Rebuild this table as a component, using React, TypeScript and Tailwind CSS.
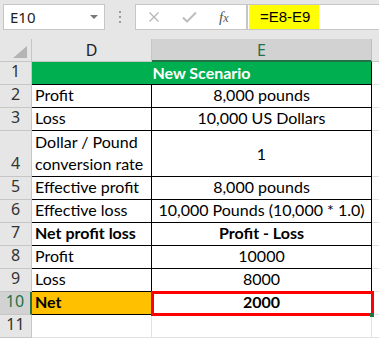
import React from "react";

const cellFont = "font-['Lato',sans-serif] text-[16px]";
const uiFont = "font-['Noto_Sans',sans-serif]";

type Row = { n: string; d: string[]; e: string; bold?: boolean; tall?: boolean };

const rows: Row[] = [
  { n: "2", d: ["Profit"], e: "8,000 pounds" },
  { n: "3", d: ["Loss"], e: "10,000 US Dollars" },
  { n: "4", d: ["Dollar / Pound", "conversion rate"], e: "1", tall: true },
  { n: "5", d: ["Effective profit"], e: "8,000 pounds" },
  { n: "6", d: ["Effective loss"], e: "10,000 Pounds (10,000 * 1.0)" },
  { n: "7", d: ["Net profit loss"], e: "Profit - Loss", bold: true },
  { n: "8", d: ["Profit"], e: "10000" },
  { n: "9", d: ["Loss"], e: "8000" },
];

function RowHeader({ n, selected }: { n: string; selected?: boolean }) {
  return (
    <div
      className={
        selected
          ? `w-[32px] shrink-0 border-b border-r-2 border-b-[#c6c6c6] border-r-[#217346] bg-[#d2d2d2] text-[#217346] flex items-end justify-center pb-[1px] text-[16px] ${uiFont}`
          : `w-[32px] shrink-0 border-b border-r border-[#c6c6c6] bg-[#e6e6e6] text-[#333] flex items-end justify-center pb-[1px] text-[16px] ${uiFont}`
      }
    >
      {n}
    </div>
  );
}

export default function App() {
  return (
    <div className="w-[379px] h-[338px] overflow-hidden bg-[#e6e6e6] relative">
      {/* Formula bar */}
      <div className="h-[39px] flex items-start pt-[4px]">
        <div className={`ml-[3px] w-[102px] h-[26px] bg-white border border-[#c6c6c6] flex items-center justify-between pl-[6px] pr-[6px] text-[15px] text-[#222] ${uiFont}`}>
          <span>E10</span>
          <svg width="8" height="5" viewBox="0 0 8 5">
            <polygon points="0,0 8,0 4,4" fill="#777" />
          </svg>
        </div>
        <div className="w-[30px] h-[26px] flex flex-col items-center justify-center gap-[3px]">
          <div className="w-[2px] h-[2px] bg-[#9a9a9a]" />
          <div className="w-[2px] h-[2px] bg-[#9a9a9a]" />
          <div className="w-[2px] h-[2px] bg-[#9a9a9a]" />
        </div>
        <div className="w-[112px] h-[26px] bg-white border border-[#c6c6c6] flex items-center">
          <svg className="ml-[12px]" width="12" height="12" viewBox="0 0 12 12">
            <path d="M1.5 1.5 L10.5 10.5 M10.5 1.5 L1.5 10.5" stroke="#b5b5b5" strokeWidth="1.3" fill="none" />
          </svg>
          <svg className="ml-[22px]" width="15" height="12" viewBox="0 0 15 12">
            <path d="M1 6.5 L5 10.5 L14 1.5" stroke="#bdbdbd" strokeWidth="2" fill="none" />
          </svg>
          <span className="ml-[22px] font-['Liberation_Serif',serif] italic text-[15px] text-[#555] leading-none">
            f<span className="text-[12px]">x</span>
          </span>
        </div>
        <div className="flex-1 h-[26px] bg-white border border-[#c6c6c6] border-r-0 flex items-stretch">
          <div className={`ml-[1px] w-[70px] bg-[#ffff00] flex items-center pl-[11px] text-[15px] text-black font-['Liberation_Sans',sans-serif]`}>
            =E8-E9
          </div>
        </div>
      </div>

      {/* Column headers */}
      <div className="flex h-[23px]">
        <div className="w-[32px] shrink-0 border-r border-b border-[#c6c6c6] bg-[#e6e6e6] flex items-end justify-end pr-[4px] pb-[3px]">
          <svg width="14" height="12" viewBox="0 0 14 12">
            <polygon points="14,0 14,12 0,12" fill="#b4b4b4" />
          </svg>
        </div>
        <div className={`w-[120px] shrink-0 border-r border-b border-[#c6c6c6] bg-[#e6e6e6] flex items-center justify-center text-[16px] text-[#222] ${uiFont}`}>
          D
        </div>
        <div className={`w-[220px] shrink-0 border-r border-[#bdbdbd] border-b-2 border-b-[#217346] bg-[#d2d2d2] flex items-center justify-center text-[16px] text-[#217346] ${uiFont}`}>
          E
        </div>
        <div className="flex-1 border-b border-[#c6c6c6] bg-[#e6e6e6]" />
      </div>

      {/* Row 1 */}
      <div className="flex h-[23px]">
        <RowHeader n="1" />
        <div className={`w-[340px] shrink-0 border-r border-b border-black bg-[#00b050] flex items-center justify-center font-bold text-white ${cellFont} text-[15px]`}>
          New Scenario
        </div>
        <div className="flex-1 bg-white border-b border-[#e1e1e1]" />
      </div>

      {rows.map((r) => (
        <div key={r.n} className={r.tall ? "flex h-[46px]" : "flex h-[23px]"}>
          <RowHeader n={r.n} />
          <div
            className={`w-[120px] shrink-0 border-r border-b border-black bg-white pl-[3px] flex flex-col justify-end pb-[1px] text-black leading-[22px] whitespace-nowrap ${cellFont} ${r.bold ? "font-bold" : ""}`}
          >
            {r.d.map((t) => (
              <div key={t}>{t}</div>
            ))}
          </div>
          <div
            className={`w-[220px] shrink-0 border-r border-b border-black bg-white flex justify-center text-black whitespace-nowrap ${cellFont} ${r.bold ? "font-bold" : ""} ${r.tall ? "items-center" : "items-end pb-[1px] leading-[22px]"}`}
          >
            {r.e}
          </div>
          <div className="flex-1 bg-white border-b border-[#e1e1e1]" />
        </div>
      ))}

      {/* Row 10 */}
      <div className="flex h-[23px]">
        <RowHeader n="10" selected />
        <div className={`w-[120px] shrink-0 border-r border-b border-black bg-[#ffc000] pl-[3px] flex items-end pb-[1px] leading-[22px] font-bold text-black ${cellFont}`}>
          Net
        </div>
        <div className={`relative w-[220px] shrink-0 border-r border-b border-black bg-white flex items-end justify-center pb-[1px] leading-[22px] font-bold text-black ${cellFont}`}>
          2000
          <div className="absolute -left-[1px] -top-[1px] w-[223px] h-[25px] border-[3px] border-[#ff0000]" />
          <div className="absolute -right-[3px] -bottom-[3px] w-[4px] h-[4px] bg-[#217346]" />
        </div>
        <div className="flex-1 bg-white border-b border-[#e1e1e1]" />
      </div>

      {/* Row 11 */}
      <div className="flex h-[23px]">
        <RowHeader n="11" />
        <div className="w-[120px] shrink-0 border-r border-b border-[#e1e1e1] bg-white" />
        <div className="w-[220px] shrink-0 border-r border-b border-[#e1e1e1] bg-white" />
        <div className="flex-1 bg-white border-b border-[#e1e1e1]" />
      </div>
    </div>
  );
}
